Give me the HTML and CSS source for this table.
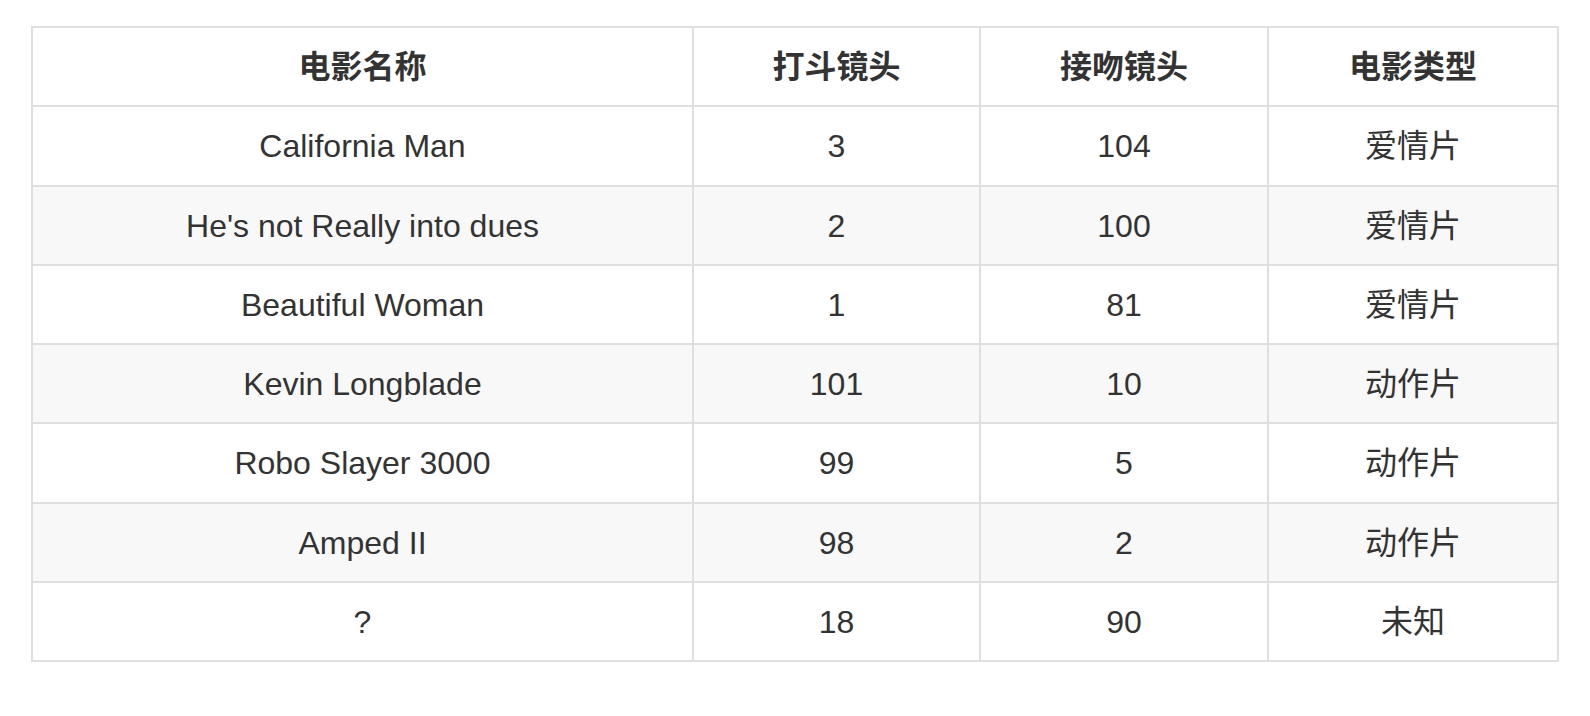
FILE: index.html
```html
<!DOCTYPE html>
<html lang="zh">
<head>
<meta charset="utf-8">
<title>电影</title>
<link rel="stylesheet" href="styles.css">
</head>
<body>
<div class="page">
<table class="movies">
<colgroup>
<col class="c1"><col class="c2"><col class="c3"><col class="c4">
</colgroup>
<thead>
<tr><th>电影名称</th><th>打斗镜头</th><th>接吻镜头</th><th>电影类型</th></tr>
</thead>
<tbody>
<tr><td>California Man</td><td>3</td><td>104</td><td>爱情片</td></tr>
<tr><td>He's not Really into dues</td><td>2</td><td>100</td><td>爱情片</td></tr>
<tr><td>Beautiful Woman</td><td>1</td><td>81</td><td>爱情片</td></tr>
<tr><td>Kevin Longblade</td><td>101</td><td>10</td><td>动作片</td></tr>
<tr><td>Robo Slayer 3000</td><td>99</td><td>5</td><td>动作片</td></tr>
<tr><td>Amped II</td><td>98</td><td>2</td><td>动作片</td></tr>
<tr><td>?</td><td>18</td><td>90</td><td>未知</td></tr>
</tbody>
</table>
</div>
</body>
</html>
```
FILE: styles.css
```css
html, body {
  margin: 0;
  padding: 0;
  background: #ffffff;
}
.page {
  padding: 26px 31px;
  font-family: "Liberation Sans", "Noto Sans CJK SC", sans-serif;
  color: #333333;
}
.movies {
  width: 1528px;
  border-collapse: collapse;
  table-layout: fixed;
  font-size: 32px;
}
.c1 { width: 661px; }
.c2 { width: 287px; }
.c3 { width: 288px; }
.movies th,
.movies td {
  border: 2px solid #dfdfdf;
  padding: 15px 26px 13px;
  line-height: 49.25px;
  text-align: center;
  font-weight: normal;
}
.movies th {
  font-weight: bold;
}
.movies tbody tr:nth-child(even) {
  background: #f8f8f8;
}
```
